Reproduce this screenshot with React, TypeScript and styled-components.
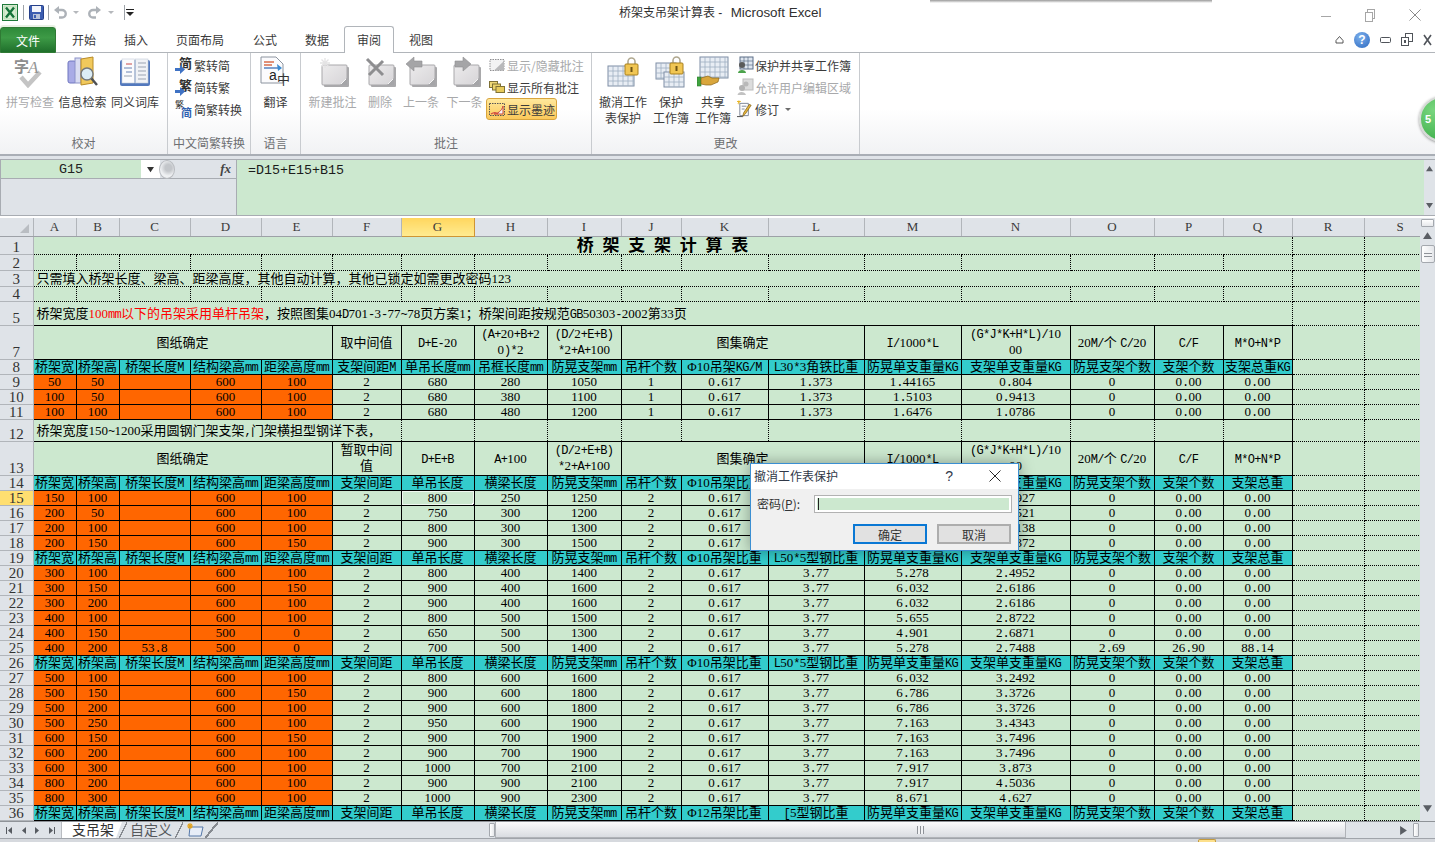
import React, { ReactNode } from "react";
import styled, { createGlobalStyle } from "styled-components";

const GREEN = "#cce8cf";
const CYAN = "#33cccc";
const ORANGE = "#ff6600";
const GRAY = "#dfe3e8";
const LINE = "#b1b5ba";
const UI_FONT = `"Noto Sans CJK SC", "Liberation Sans", sans-serif`;
const CELL_FONT = `"Liberation Serif", "Noto Sans CJK SC", serif`;
const FW_COMMA = "\uff0c";
const FW_SEMI = "\uff1b";

const Global = createGlobalStyle`
  html, body { margin: 0; padding: 0; overflow: hidden; background: #fff; }
  * { box-sizing: border-box; }
`;

const Root = styled.div`
  position: relative;
  width: 1435px;
  height: 842px;
  overflow: hidden;
  display: flex;
  flex-direction: column;
  font-family: ${UI_FONT};
  font-size: 12px;
  color: #3b3b3b;
  background: #fff;
`;

/* ---------- title bar ---------- */
const TitleBar = styled.div`
  position: relative;
  flex: none;
  height: 26px;
  display: flex;
  align-items: flex-start;
  background: #fff;
`;
const TopShadow = styled.div`
  position: absolute;
  left: 930px;
  top: 0;
  width: 282px;
  height: 3px;
  background: linear-gradient(#9a9a9a, #ffffff00);
`;
const Qat = styled.div`
  width: 619px;
  height: 24px;
  display: flex;
  align-items: center;
  padding-left: 2px;
`;
const QatSep = styled.span`
  width: 1px;
  height: 15px;
  background: #9ea3a9;
  margin: 0 ${(p: { $m: number }) => p.$m}px;
`;
const QatDrop = styled.span`
  width: 0;
  height: 0;
  margin: 1px 9px 0 6px;
  border-left: 3px solid transparent;
  border-right: 3px solid transparent;
  border-top: 3px solid #b5b8bc;
`;
const AppTitle = styled.div`
  font-family: "Liberation Sans", "Noto Sans CJK SC", sans-serif;
  font-size: 12px;
  line-height: 26px;
  color: #303030;
  white-space: nowrap;
`;
const AppName = styled.span`
  font-size: 13.4px;
  margin-left: 5px;
`;
const WinControls = styled.div`
  margin-left: auto;
  display: flex;
  align-items: center;
  height: 26px;
  padding-top: 4px;
  padding-right: 14px;
  gap: 34px;
`;

/* ---------- tab row ---------- */
const TabRow = styled.div`
  flex: none;
  height: 27px;
  display: flex;
  align-items: flex-end;
  border-bottom: 1px solid ${LINE};
  background: #fff;
`;
const FileTab = styled.div`
  position: relative;
  width: 56px;
  height: 26px;
  margin-bottom: -1px;
  border-radius: 3px 3px 0 0;
  border: 1px solid #2f7a34;
  background: linear-gradient(#2e8a3a 0%, #3d9a46 40%, #1f6f2b 100%);
  box-shadow: 0 -2px 0 #e8f1e4, 0 3px 0 #e4efdf;
  color: #fff;
  text-align: center;
  line-height: 25px;
  font-size: 12px;
`;
const RibbonTab = styled.div<{ $w: number; $active?: boolean }>`
  width: ${(p) => p.$w}px;
  height: ${(p) => (p.$active ? 27 : 25)}px;
  margin-bottom: ${(p) => (p.$active ? -1 : 0)}px;
  text-align: center;
  line-height: ${(p) => (p.$active ? 26 : 25)}px;
  background: #fff;
  border: ${(p) => (p.$active ? `1px solid ${LINE}` : "none")};
  border-bottom: none;
  border-radius: 3px 3px 0 0;
  position: relative;
  color: #3a3a3a;
`;
const HelpRow = styled.div`
  margin-left: auto;
  height: 25px;
  display: flex;
  align-items: center;
  padding-right: 3px;
  gap: 10px;
`;
const HelpDot = styled.span`
  width: 16px;
  height: 16px;
  border-radius: 50%;
  background: radial-gradient(circle at 40% 30%, #7db0ec, #2c69c0);
  color: #fff;
  font: bold 12px/16px "Liberation Sans", sans-serif;
  text-align: center;
`;

/* ---------- ribbon ---------- */
const Ribbon = styled.div`
  position: relative;
  flex: none;
  height: 103px;
  display: flex;
  background: linear-gradient(#ffffff 55%, #f1f2f4 100%);
  border-bottom: 2px solid #a9aeb5;
`;
const Group = styled.div<{ $w: number }>`
  width: ${(p) => p.$w}px;
  flex: none;
  display: flex;
  flex-direction: column;
  border-right: 1px solid #c8cbcf;
`;
const GroupBody = styled.div<{ $pl?: number }>`
  flex: 1;
  display: flex;
  padding-left: ${(p) => p.$pl ?? 0}px;
`;
const GroupLabel = styled.div`
  flex: none;
  height: 22px;
  line-height: 21px;
  text-align: center;
  color: #6d6f72;
  white-space: nowrap;
`;
const BigBtn = styled.div<{ $w: number; $off?: boolean }>`
  width: ${(p) => p.$w}px;
  flex: none;
  display: flex;
  flex-direction: column;
  align-items: center;
  padding-top: 3px;
  color: ${(p) => (p.$off ? "#a8a9ab" : "#3b3b3b")};
`;
const BigLabel = styled.div`
  margin-top: 6px;
  line-height: 16px;
  text-align: center;
  white-space: pre;
`;
const SmallCol = styled.div<{ $ml?: number }>`
  display: flex;
  flex-direction: column;
  align-items: flex-start;
  padding-top: 1px;
  margin-left: ${(p) => p.$ml ?? 0}px;
`;
const SmallBtn = styled.div<{ $off?: boolean; $on?: boolean }>`
  height: 22px;
  display: flex;
  align-items: center;
  gap: 1px;
  padding: 0 2px 0 2px;
  white-space: nowrap;
  color: ${(p) => (p.$off ? "#a8a9ab" : "#3b3b3b")};
  border-radius: 3px;
  ${(p) =>
    p.$on
      ? `background: linear-gradient(#ffe89c, #fbc85a); border: 1px solid #d8a53e; padding: 0 1px;`
      : ""}
`;
const MiniCaret = styled.span`
  width: 0;
  height: 0;
  margin-left: 5px;
  border-left: 3px solid transparent;
  border-right: 3px solid transparent;
  border-top: 3px solid #6d6d6d;
`;
const FloatBall = styled.div`
  position: absolute;
  left: 1419px;
  top: 43px;
  width: 46px;
  height: 46px;
  border-radius: 50%;
  border: 2px solid #d6dad6;
  background: radial-gradient(circle at 30% 30%, #79d67f, #2fa53c);
  box-shadow: 0 1px 3px rgba(0, 0, 0, 0.4);
  color: #fff;
  font: bold 11px/42px "Liberation Sans", sans-serif;
  padding-left: 4px;
`;

/* ---------- formula bar ---------- */
const FormulaWrap = styled.div`
  flex: none;
  height: 63px;
  padding-top: 3px;
  background: ${GRAY};
`;
const FormulaBar = styled.div`
  height: 57px;
  display: flex;
  border: 1px solid #a8acb2;
  border-right: none;
`;
const FormulaLeft = styled.div`
  width: 236px;
  flex: none;
  display: flex;
  flex-direction: column;
  border-right: 1px solid #a8acb2;
  background: ${GRAY};
`;
const NameRow = styled.div`
  height: 19px;
  flex: none;
  display: flex;
  border-bottom: 1px solid #a8acb2;
`;
const NameBox = styled.div`
  width: 140px;
  flex: none;
  background: ${GREEN};
  font: 13.33px/20px "Liberation Mono", monospace;
  text-align: center;
  color: #222;
`;
const NameDrop = styled.div`
  width: 19px;
  flex: none;
  background: #fff;
  display: flex;
  align-items: center;
  justify-content: center;
`;
const FxZone = styled.div`
  flex: 1;
  display: flex;
  align-items: center;
  justify-content: space-between;
  padding-right: 5px;
`;
const FxGrip = styled.span`
  width: 16px;
  height: 19px;
  margin-left: -1px;
  border-radius: 50%;
  border: 1px solid #b9bcc0;
  background: radial-gradient(circle at 60% 40%, #c3c6ca 25%, #eef0f2 60%);
`;
const Fx = styled.span`
  font: italic bold 13px/16px "Liberation Serif", serif;
  color: #444;
`;
const FormulaInput = styled.div`
  flex: 1;
  background: ${GREEN};
  font: 13.33px/21px "Liberation Mono", monospace;
  color: #1b1b1b;
  padding-left: 11px;
`;
const FormulaScroll = styled.div`
  width: 11px;
  flex: none;
  background: ${GRAY};
  display: flex;
  flex-direction: column;
  align-items: center;
  justify-content: space-between;
  padding: 5px 0 6px;
`;
const SplitLine = styled.div`
  height: 4px;
  background: #fff;
  border-bottom: 2px solid #a8acb2;
  margin-top: 0;
`;

/* ---------- sheet ---------- */
const SheetArea = styled.div`
  flex: none;
  height: 603px;
  margin-top: -1px;
  display: flex;
  overflow: hidden;
`;
const SheetClip = styled.div`
  width: 1420px;
  flex: none;
  overflow: hidden;
  background: ${GREEN};
`;
const Sheet = styled.table`
  table-layout: fixed;
  width: 1436px;
  border-collapse: collapse;
  font-family: ${CELL_FONT};
  font-size: 13px;
  color: #000;
`;
const Tr = styled.tr<{ $h: number }>`
  height: ${(p) => p.$h}px;
`;
const Corner = styled.th`
  padding: 0;
  background: ${GRAY};
  border-right: 1px solid ${LINE};
  border-bottom: 1px solid #9da1a7;
  position: relative;
`;
const CornerTri = styled.span`
  position: absolute;
  right: 4px;
  bottom: 3px;
  width: 0;
  height: 0;
  border-left: 9px solid transparent;
  border-bottom: 9px solid #b9bdc2;
`;
const ColHead = styled.th<{ $on?: boolean }>`
  padding: 0;
  font-weight: 400;
  font-size: 13px;
  color: #3a3a3a;
  background: ${(p) => (p.$on ? "linear-gradient(#ffd65e, #ffeb90)" : GRAY)};
  border-right: 1px solid ${(p) => (p.$on ? "#cf9533" : LINE)};
  border-left: 1px solid ${(p) => (p.$on ? "#cf9533" : LINE)};
  border-bottom: 1px solid ${(p) => (p.$on ? "#cf9533" : "#9da1a7")};
`;
const RowHead = styled.td<{ $on?: boolean }>`
  padding: 0;
  font-size: 15px;
  line-height: 14px;
  text-align: center;
  vertical-align: bottom;
  color: #333;
  overflow: hidden;
  background: ${(p) => (p.$on ? "#ffdf70" : GRAY)};
  border-right: 1px solid ${LINE};
  border-bottom: 1px solid ${LINE};
`;
type CellKind = "green" | "cyan" | "orange";
const Cell = styled.td<{
  $kind: CellKind;
  $dot?: boolean;
  $left?: boolean;
  $wrap?: boolean;
  $big?: boolean;
  $rs?: boolean;
}>`
  position: relative;
  padding: 0 ${(p) => (p.$left ? "0 0 3px" : "0")};
  overflow: ${(p) => (p.$left ? "visible" : "hidden")};
  white-space: ${(p) => (p.$wrap ? "pre" : "nowrap")};
  line-height: ${(p) => (p.$wrap ? "16px" : "13px")};
  text-align: ${(p) => (p.$left ? "left" : "center")};
  vertical-align: middle;
  font-size: ${(p) => (p.$big ? "17px" : "13px")};
  font-weight: ${(p) => (p.$big ? 700 : 400)};
  word-spacing: ${(p) => (p.$big ? "4.5px" : "0")};
  border: 1px ${(p) => (p.$dot ? "dotted" : "solid")} #000;
  ${(p) => (p.$rs ? "border-right: 1px solid #000;" : "")}
  background: ${(p) => (p.$kind === "cyan" ? CYAN : p.$kind === "orange" ? ORANGE : GREEN)};
`;
const Latin = styled.span`
  font-family: "Liberation Mono", monospace;
  font-size: 12px;
  letter-spacing: -0.7px;
  line-height: 10px;
`;
const Red = styled.span`
  color: #ff0000;
`;
const Selection = styled.div`
  position: absolute;
  left: -2px;
  right: -2px;
  top: -2px;
  bottom: -2px;
  border: 2px solid #2b1436;
  outline: 1px solid #ffffffb0;
  outline-offset: -3px;
  pointer-events: none;
`;
const SelHandle = styled.div`
  position: absolute;
  right: -4px;
  bottom: -4px;
  width: 5px;
  height: 5px;
  background: #2b1436;
  outline: 1px solid #fff;
`;

const VScroll = styled.div`
  width: 15px;
  flex: none;
  display: flex;
  flex-direction: column;
  align-items: center;
  background: ${GRAY};
`;
const VSplit = styled.div`
  width: 13px;
  height: 8px;
  margin-top: 1px;
  background: linear-gradient(#fff, #e6e8eb);
  border: 1px solid #a4a8ae;
  border-radius: 1px;
`;
const VThumb = styled.div`
  width: 14px;
  height: 18px;
  margin-top: 5px;
  border: 1px solid #a4a8ae;
  border-radius: 2px;
  background: repeating-linear-gradient(#f2f3f5 0 2px, #8e9298 2px 3px) center / 8px 7px no-repeat,
    linear-gradient(90deg, #fff, #e3e5e9);
`;
const VArrow = styled.div<{ $mt: number }>`
  margin-top: ${(p) => p.$mt}px;
  width: 9px;
  height: 9px;
`;

/* ---------- bottom bar ---------- */
const SheetBar = styled.div`
  flex: none;
  height: 17px;
  display: flex;
  align-items: stretch;
  background: ${GRAY};
  border-top: 1px solid #8f9398;
`;
const NavZone = styled.div`
  width: 62px;
  flex: none;
  display: flex;
  align-items: center;
  justify-content: space-around;
  padding: 0 3px 0 3px;
  border-right: 1px solid #b9bcc1;
`;
const SheetTab = styled.div<{ $on?: boolean; $w: number; $pl: number }>`
  width: ${(p) => p.$w}px;
  flex: none;
  font-size: 14px;
  line-height: 15px;
  padding-left: ${(p) => p.$pl}px;
  color: ${(p) => (p.$on ? "#333" : "#55585c")};
  background: ${(p) => (p.$on ? "#fff" : "transparent")};
  clip-path: ${(p) => (p.$on ? "polygon(0 0, 100% 0, calc(100% - 6px) 100%, 0 100%)" : "none")};
  white-space: nowrap;
`;
const TabSlash = styled.span<{ $w?: number }>`
  width: ${(p) => p.$w ?? 8}px;
  flex: none;
  margin-left: -3px;
  background: linear-gradient(to bottom right, transparent 46%, #868a90 46%, #868a90 56%, transparent 56%);
`;
const NewTab = styled.div`
  width: 25px;
  flex: none;
  display: flex;
  align-items: center;
  justify-content: center;
`;
const TabFill = styled.div`
  flex: 1;
`;
const HSplit = styled.div`
  width: 6px;
  flex: none;
  margin: 1px 0;
  border: 1px solid #a4a8ae;
  background: linear-gradient(90deg, #fff, #e6e8eb);
  border-radius: 1px;
`;
const HThumb = styled.div`
  width: 851px;
  flex: none;
  border: 1px solid #b0b3b8;
  border-top: none;
  background: linear-gradient(#fbfbfc, #d9dce1);
  display: flex;
  align-items: center;
  justify-content: center;
`;
const HGrip = styled.span`
  width: 7px;
  height: 8px;
  background: repeating-linear-gradient(90deg, #8e9298 0 1px, #f2f3f5 1px 3px);
`;
const HTrack = styled.div`
  width: 67px;
  flex: none;
  display: flex;
  align-items: center;
  justify-content: flex-end;
  padding-right: 5px;
`;
const BarEnd = styled.span`
  flex: none;
  width: 16px;
`;
const StatusBar = styled.div`
  flex: 1;
  min-height: 0;
  position: relative;
  background: #d6d9de;
  border-top: 1px solid #a0a4aa;
`;
const StatusStub = styled.span`
  position: absolute;
  left: 1198px;
  top: 0;
  width: 18px;
  height: 4px;
  background: #fde08c;
  border: 1px solid #c49a3e;
  border-bottom: none;
  border-radius: 2px 2px 0 0;
`;

/* ---------- dialog ---------- */
const Dialog = styled.div`
  position: absolute;
  left: 750px;
  top: 463px;
  width: 269px;
  height: 88px;
  display: flex;
  flex-direction: column;
  background: #f0f0f0;
  border: 1px solid #3b8fd2;
  box-shadow: 0 0 14px rgba(0, 0, 0, 0.35);
  color: #333;
`;
const DialogTitle = styled.div`
  flex: none;
  height: 25px;
  display: flex;
  align-items: center;
  padding: 0 0 2px 3px;
  background: #fff;
  color: #303848;
`;
const DialogHelp = styled.span`
  margin-left: auto;
  margin-right: 36px;
  font: 14px/16px "Liberation Sans", sans-serif;
`;
const DialogClose = styled.div`
  margin-right: 17px;
  display: flex;
`;
const DialogRow = styled.div`
  display: flex;
  align-items: center;
  padding: 6px 6px 0 6px;
  gap: 8px;
`;
const DialogLabel = styled.span`
  margin-top: -2px;
`;
const Field = styled.div`
  width: 198px;
  height: 18px;
  margin-left: auto;
  border: 1px solid #b2b2b2;
  padding: 2px;
  background: #fff;
`;
const FieldInner = styled.div`
  height: 100%;
  background: ${GREEN};
  padding-left: 1px;
`;
const Caret = styled.span`
  display: block;
  width: 1px;
  height: 100%;
  background: #222;
`;
const DialogBtns = styled.div`
  display: flex;
  justify-content: flex-end;
  gap: 10px;
  padding: 11px 7px 0 0;
`;
const DialogBtn = styled.div<{ $main?: boolean }>`
  width: 74px;
  height: 20px;
  text-align: center;
  line-height: 17px;
  background: #e1e1e1;
  border: 2px solid ${(p) => (p.$main ? "#0a78d4" : "#adadad")};
`;

/* ---------- drawn icons ---------- */
const Ico = styled.svg`
  display: block;
  flex: none;
`;
const svgFont = `"Noto Sans CJK SC", sans-serif`;

const Tri = ({ r = 0, c = "#555", s = 7 }: { r?: number; c?: string; s?: number }) => (
  <Ico width={s} height={s} viewBox="0 0 8 8" transform={`rotate(${r})`}>
    <path d="M4 1 L8 7 H0 Z" fill={c} />
  </Ico>
);
const NavIcon = ({ dir, bar }: { dir: number; bar?: boolean }) => (
  <Ico width={9} height={9} viewBox="0 0 9 9">
    {dir < 0 ? <path d="M7 1 L3 4.5 L7 8 Z" fill="#565a60" /> : <path d="M2 1 L6 4.5 L2 8 Z" fill="#565a60" />}
    {bar && <rect x={dir < 0 ? 1 : 7} y="1" width="1" height="7" fill="#565a60" />}
  </Ico>
);
const ExcelLogo = () => (
  <Ico width={16} height={17} viewBox="0 0 16 17">
    <rect x=".5" y=".5" width="15" height="16" fill="#eaf5e6" stroke="#1f7a3a" />
    <rect x="2" y="2" width="12" height="13" fill="#d9eed2" stroke="#9fcb9a" strokeWidth=".6" />
    <path d="M4 3.5 L12 13.5 M12 3.5 L4 13.5" stroke="#17733a" strokeWidth="2.4" />
  </Ico>
);
const SaveIcon = () => (
  <Ico width={15} height={15} viewBox="0 0 15 15">
    <rect x=".5" y=".5" width="14" height="14" rx="1" fill="#3c5db0" stroke="#26408a" />
    <rect x="3" y="1" width="9" height="6" fill="#f3f5fb" />
    <rect x="4" y="9" width="7" height="5" fill="#b8c2d8" />
    <rect x="5" y="10" width="2" height="3" fill="#3c5db0" />
  </Ico>
);
const UndoIcon = ({ flip }: { flip?: boolean }) => (
  <Ico width={14} height={15} viewBox="0 0 14 15" transform={flip ? "scale(-1 1)" : undefined}>
    <path d="M5 5 H9 A3.6 3.6 0 0 1 9 12.5 H6" fill="none" stroke="#adb2b8" strokeWidth="2.4" />
    <path d="M6 1 L6 9 L1 5 Z" fill="#adb2b8" />
  </Ico>
);
const CustomIcon = () => (
  <Ico width={8} height={9} viewBox="0 0 8 9">
    <rect x="0" y="1" width="8" height="1" fill="#222" />
    <path d="M0 4 H8 L4 8 Z" fill="#222" />
  </Ico>
);
const WinMin = () => (
  <Ico width={10} height={10} viewBox="0 0 10 10">
    <path d="M0 6.5 H10" stroke="#a6a6a6" />
  </Ico>
);
const WinMax = () => (
  <Ico width={10} height={13} viewBox="0 0 10 13">
    <rect x="2.5" y=".5" width="7" height="9" fill="#fff" stroke="#a6a6a6" />
    <rect x=".5" y="3.5" width="7" height="9" fill="#fff" stroke="#a6a6a6" />
  </Ico>
);
const WinClose = ({ c = "#8a8a8a", s = 12 }: { c?: string; s?: number }) => (
  <Ico width={s} height={s} viewBox="0 0 12 12">
    <path d="M.5 .5 L11.5 11.5 M11.5 .5 L.5 11.5" stroke={c} />
  </Ico>
);
const CaretUp = () => (
  <Ico width={9} height={9} viewBox="0 0 9 9">
    <path d="M1 5.5 L4.5 1.5 L8 5.5 V8 H1 Z" fill="none" stroke="#555" />
  </Ico>
);
const MiniMin = () => (
  <Ico width={11} height={8} viewBox="0 0 11 8">
    <rect x=".5" y="1.5" width="10" height="5" rx="1" fill="none" stroke="#50545a" />
  </Ico>
);
const MiniRestore = () => (
  <Ico width={12} height={13} viewBox="0 0 12 13">
    <rect x="4.5" y=".5" width="7" height="8" fill="#fff" stroke="#50545a" />
    <rect x=".5" y="4.5" width="7" height="8" fill="#fff" stroke="#50545a" />
    <rect x="3" y="7" width="2" height="3" fill="#50545a" />
  </Ico>
);
const MiniClose = () => (
  <Ico width={9} height={12} viewBox="0 0 9 12">
    <path d="M1 1 L8 11 M8 1 L1 11" stroke="#50545a" strokeWidth="1.6" />
  </Ico>
);

const SpellIcon = () => (
  <Ico width={32} height={32} viewBox="0 0 32 32">
    <path d="M7 21 L14 29 L26 16" fill="none" stroke="#c4c4c4" strokeWidth="4.5" />
    <text x="0" y="16" fontSize="15" fontWeight="700" fontFamily={svgFont} fill="#8d8d8d">字</text>
    <text x="14" y="17" fontSize="17" fontStyle="italic" fontFamily="Liberation Serif" fill="#949494">A</text>
  </Ico>
);
const ResearchIcon = () => (
  <Ico width={32} height={32} viewBox="0 0 32 32">
    <rect x="1" y="5" width="8" height="22" rx="2" fill="#a9abe6" stroke="#6f76bf" />
    <rect x="8" y="2" width="6" height="25" fill="#d9dcf2" stroke="#8b92c8" />
    <path d="M14 3 L26 1 V27 L14 29 Z" fill="#f1c95c" stroke="#b88b26" />
    <circle cx="20" cy="18" r="6" fill="#dcedf5" stroke="#74777b" strokeWidth="1.4" />
    <path d="M24.5 22.5 L30 29" stroke="#4e5054" strokeWidth="2.4" />
  </Ico>
);
const ThesaurusIcon = () => (
  <Ico width={32} height={32} viewBox="0 0 32 32">
    <rect x="1" y="4" width="30" height="26" rx="2" fill="#5278bd" />
    <rect x="3" y="3" width="12.5" height="24" fill="#fbfbfd" stroke="#c2cbd9" strokeWidth=".6" />
    <rect x="16.5" y="3" width="12.5" height="24" fill="#f0f2f6" stroke="#c2cbd9" strokeWidth=".6" />
    {[7, 11, 15, 19, 23].map((y) => (
      <path key={y} d={`M19 ${y} H27`} stroke="#9aa3b2" />
    ))}
    <path d="M7 8 H13" stroke="#c84a4a" />
    <path d="M5 12 H13 M7 16 H13" stroke="#6a84b4" />
    <path d="M5 20 H13" stroke="#9aa3b2" />
  </Ico>
);
const TranslateIcon = () => (
  <Ico width={32} height={32} viewBox="0 0 32 32">
    <path d="M1 1 H16 L23 8 V27 H1 Z" fill="#fbfbfd" stroke="#8c949f" />
    <path d="M4 6 H14" stroke="#d2552f" strokeWidth="1.3" />
    <path d="M4 9 H12" stroke="#d2552f" strokeWidth="1.3" />
    <path d="M4 12 H18" stroke="#3d6fb5" strokeWidth="1.3" />
    <path d="M17 8 L22 12 L18 15" fill="#3a8ad0" />
    <text x="9" y="24" fontSize="14" fontFamily="Liberation Sans" fill="#222">a</text>
    <text x="17" y="28" fontSize="13" fontFamily={svgFont} fill="#333">中</text>
  </Ico>
);
const NoteIcon = ({ mark }: { mark: "new" | "del" | "prev" | "next" }) => (
  <Ico width={32} height={32} viewBox="0 0 32 32">
    <defs>
      <linearGradient id={`note-${mark}`} x1="0" y1="0" x2="1" y2="1">
        <stop offset="0" stopColor="#ecebec" />
        <stop offset="1" stopColor="#d6d4d7" />
      </linearGradient>
    </defs>
    <rect x="7" y="11" width="25" height="20" rx="1" fill="#a9a9ab" />
    <rect x="5" y="9" width="25" height="20" rx="1" fill={`url(#note-${mark})`} stroke="#a9a8ab" />
    <path d="M30 22 V29 H23 Z" fill="#a5a5a8" />
    <path d="M24 28 L29 23" stroke="#f4f4f4" />
    {mark === "new" && (
      <path d="M8 2 V12 M3 7 H13 M4.5 3.5 L11.5 10.5 M11.5 3.5 L4.5 10.5" stroke="#e4e3e4" strokeWidth="1.3" />
    )}
    {mark === "del" && <path d="M3 3 L19 19 M19 5 L5 19" stroke="#8e8e90" strokeWidth="3" />}
    {mark === "prev" && <path d="M1 8 L9 1 V5 H17 V11 H9 V15 Z" fill="#a5a5a7" stroke="#8f8f91" strokeWidth=".6" />}
    {mark === "next" && <path d="M22 8 L14 1 V5 H6 V11 H14 V15 Z" fill="#a5a5a7" stroke="#8f8f91" strokeWidth=".6" />}
  </Ico>
);
const GridBlock = ({ x, y, w, h, fill = "#e8edf4" }: { x: number; y: number; w: number; h: number; fill?: string }) => {
  const vs = [];
  for (let i = x + 5; i < x + w; i += 5) vs.push(`M${i} ${y} V${y + h}`);
  const hs = [];
  for (let j = y + 5; j < y + h; j += 5) hs.push(`M${x} ${j} H${x + w}`);
  return (
    <g>
      <rect x={x} y={y} width={w} height={h} fill={fill} stroke="#7f8ea5" />
      <path d={[...vs, ...hs].join(" ")} stroke="#a0aec2" strokeWidth=".8" />
    </g>
  );
};
const Padlock = ({ x, y }: { x: number; y: number }) => (
  <g>
    <path d={`M${x + 3} ${y + 5} V${y + 2.5} A3.5 3.5 0 0 1 ${x + 10} ${y + 2.5} V${y + 5}`} fill="none" stroke="#b0a890" strokeWidth="1.6" />
    <rect x={x} y={y + 5} width="13" height="11" rx="1" fill="#f1c653" stroke="#a9801f" />
    <rect x={x + 5.5} y={y + 8} width="2" height="5" fill="#6f5414" />
  </g>
);
const UnprotectIcon = () => (
  <Ico width={32} height={32} viewBox="0 0 32 32">
    <GridBlock x={1} y={10} w={26} h={20} />
    <Padlock x={18} y={3} />
  </Ico>
);
const ProtectBookIcon = () => (
  <Ico width={32} height={32} viewBox="0 0 32 32">
    <GridBlock x={1} y={7} w={20} h={16} />
    <GridBlock x={9} y={16} w={20} h={15} />
    <Padlock x={15} y={2} />
  </Ico>
);
const ShareIcon = () => (
  <Ico width={32} height={32} viewBox="0 0 32 32">
    <GridBlock x={3} y={1} w={28} h={21} />
    <rect x="0" y="21" width="4" height="9" fill="#3fa33f" stroke="#2d7a2d" strokeWidth=".6" />
    <path d="M4 22 L11 20 L15 22 L22 22 L21 26 L14 29 L9 29 L4 28 Z" fill="#d9a63c" stroke="#8a6417" strokeWidth=".7" />
  </Ico>
);
const GlyphArrow = ({ g }: { g: string }) => (
  <Ico width={18} height={22} viewBox="0 -3 18 22">
    <text x="4" y="11" fontSize="13" fontWeight="700" fontFamily={svgFont} fill="#2f2f2f">{g}</text>
    <path d="M0 11 H5 V8 L10 12.5 L5 17 V14 H0 Z" fill="#3f72c4" />
  </Ico>
);
const GlyphPair = () => (
  <Ico width={18} height={22} viewBox="0 -3 18 22">
    <text x="0" y="7" fontSize="9" fontFamily={svgFont} fill="#333">繁</text>
    <text x="6" y="16" fontSize="11" fontWeight="700" fontFamily={svgFont} fill="#2c5fb0">简</text>
  </Ico>
);
const ToggleNote = () => (
  <Ico width={18} height={18} viewBox="0 0 18 18">
    <rect x="2" y="3.5" width="14" height="11" fill="#f2f2f3" stroke="#8f8f91" strokeDasharray="1.5 1" />
    <path d="M16 5 V14.5 H6 Z" fill="#b9b9bb" />
  </Ico>
);
const StackNote = () => (
  <Ico width={18} height={18} viewBox="0 0 18 18">
    <rect x="1.5" y="3.5" width="8" height="6" fill="#f0d977" stroke="#7f7135" />
    <rect x="4.5" y="6" width="8" height="6" fill="#ecd36a" stroke="#7f7135" />
    <rect x="8" y="8.5" width="8.5" height="6" fill="#e8cb5c" stroke="#7f7135" />
  </Ico>
);
const InkNote = () => (
  <Ico width={18} height={18} viewBox="0 0 18 18">
    <rect x="1.5" y="3.5" width="15" height="12" fill="none" stroke="#555" strokeDasharray="1.5 1" />
    <path d="M6 14 C9 14 14 11 15 6 L15 14 Z" fill="#f7f7f7" stroke="#c8473d" />
    <path d="M3 14 C6 12 8 12 10 14" fill="none" stroke="#d34a3f" strokeWidth="1.4" />
  </Ico>
);
const ProtectShareSmall = () => (
  <Ico width={17} height={18} viewBox="0 0 17 18">
    <rect x="3" y="1" width="13" height="12" fill="#dfe6ef" stroke="#5c6f88" />
    <path d="M7 1 V13 M11 1 V13 M3 5 H16 M3 9 H16" stroke="#5c6f88" strokeWidth=".7" />
    <circle cx="5" cy="9" r="3" fill="#5a5a5a" />
    <path d="M1 17 C1 13 9 13 9 17 Z" fill="#4ba34b" />
  </Ico>
);
const AllowEditSmall = () => (
  <Ico width={17} height={18} viewBox="0 0 17 18">
    <rect x="6" y="1" width="10" height="11" fill="#dcdcdc" stroke="#bcbcbc" />
    <circle cx="9" cy="6" r="2.5" fill="#b9b9b9" />
    <circle cx="5" cy="10" r="3" fill="#b3b3b3" />
    <path d="M0.5 17 C1 13 8 13 9 17 Z" fill="#c2c2c2" />
  </Ico>
);
const TrackIcon = () => (
  <Ico width={17} height={19} viewBox="0 0 18 19">
    <path d="M0 1 H4 M2 0 V4 M1 3 L3 1" stroke="#e8b21d" />
    <path d="M3 3 H12 V16 H3 Z" fill="#fff" stroke="#7b8496" />
    <path d="M5 6 H10 M5 9 H8" stroke="#7b8496" />
    <path d="M15 5 L9 14 L6 17 L7 13 L13 4 Z" fill="#e4b33a" stroke="#7a5a12" strokeWidth=".7" />
    <path d="M0 17 H6" stroke="#444" />
  </Ico>
);
const NewSheetIcon = () => (
  <Ico width={20} height={14} viewBox="0 0 20 14">
    <path d="M4 4 H17 L15 13 H3 Z" fill="#e7edf7" stroke="#5678a8" />
    <path d="M4 0 V6 M1 3 H7 M2 1 L6 5 M6 1 L2 5" stroke="#e2a21c" strokeWidth="1.1" />
  </Ico>
);

/* ---------- sheet data ---------- */
const COLS = ["A", "B", "C", "D", "E", "F", "G", "H", "I", "J", "K", "L", "M", "N", "O", "P", "Q", "R", "S"];
const WIDTHS = [33, 43, 43, 71, 71, 71, 69, 73, 73, 74, 60, 87, 96, 97, 109, 84, 69, 69, 72, 72];

interface C {
  t?: ReactNode;
  span?: number;
  kind?: CellKind;
  dot?: boolean;
  left?: boolean;
  wrap?: boolean;
  big?: boolean;
  rs?: boolean;
  sel?: boolean;
}
interface R {
  n: number;
  h: number;
  cells: C[];
  on?: boolean;
}

/* the sheet's original font gives every ASCII sign half a cell: set those in a narrow mono face */
const ASCII = /([A-Za-z+\-*/()=~.,\[\]]+)/;
const fmt = (s: ReactNode): ReactNode => {
  if (typeof s !== "string") return s;
  return s.split(ASCII).map((p, i) => (ASCII.test(p) ? <Latin key={i}>{p}</Latin> : p));
};

const dots = (from: number, to: number): C[] => {
  const out: C[] = [];
  for (let i = from; i <= to; i++) out.push({ dot: true });
  return out;
};

const head = (labels: string[]): C[] => labels.map((t) => ({ t, kind: "cyan" as CellKind }));
const COMMON = ["桥架宽", "桥架高", "桥架长度M", "结构梁高mm", "距梁高度mm"];
const TAIL = ["防晃单支重量KG", "支架单支重量KG", "防晃支架个数", "支架个数"];
const headA = (k: string, l: string): C[] =>
  head([...COMMON, "支架间距", "单吊长度", "横梁长度", "防晃支架mm", "吊杆个数", k, l, ...TAIL, "支架总重"]);

const data = (v: (string | number)[], sel?: boolean): C[] =>
  v.map((x, i) => ({
    t: String(x),
    kind: (i < 5 ? "orange" : "green") as CellKind,
    sel: sel && i === 6,
  }));

const row = (
  a: number, b: number, c: string, d: number, e: number, g: number, h: number, i: number,
  j: number, k: string, l: string, m: string, n: string, o = "0", p = "0.00", q = "0.00", sel = false
) => data([a, b, c, d, e, 2, g, h, i, j, k, l, m, n, o, p, q], sel);

const R1 = (a: number, b: number, g: number, h: number, i: number, m: string, n: string, d = 600, e = 100, c = "", o = "0", p = "0.00", q = "0.00") =>
  row(a, b, c, d, e, g, h, i, 2, "0.617", "3.77", m, n, o, p, q);

const ROWS: R[] = [
  { n: 1, h: 18, cells: [{ t: <>桥 架 支 架 计 算 表</>, span: 17, dot: true, big: true }] },
  { n: 2, h: 16, cells: dots(1, 17) },
  {
    n: 3,
    h: 16,
    cells: [
      {
        t: `只需填入桥架长度、梁高、距梁高度${FW_COMMA}其他自动计算${FW_COMMA}其他已锁定如需更改密码123`,
        span: 17,
        dot: true,
        left: true,
      },
    ],
  },
  { n: 4, h: 15, cells: dots(1, 17) },
  {
    n: 5,
    h: 24,
    cells: [
      {
        t: (
          <>
            桥架宽度
            <Red>{fmt("100mm以下的吊架采用单杆吊架")}</Red>
            {fmt(`${FW_COMMA}按照图集04D701-3-77~78页方案1${FW_SEMI}桥架间距按规范GB50303-2002第33页`)}
          </>
        ),
        span: 17,
        dot: true,
        left: true,
      },
    ],
  },
  {
    n: 7,
    h: 34,
    cells: [
      { t: "图纸确定", span: 5 },
      { t: "取中间值" },
      { t: "D+E-20" },
      { t: "(A+20+B+2\n0)*2", wrap: true },
      { t: "(D/2+E+B)\n*2+A+100", wrap: true },
      { t: "图集确定", span: 3 },
      { t: "I/1000*L" },
      { t: "(G*J*K+H*L)/10\n00", wrap: true },
      { t: "20M/个 C/20" },
      { t: "C/F" },
      { t: "M*O+N*P" },
    ],
  },
  {
    n: 8,
    h: 15,
    cells: head([
      ...COMMON, "支架间距M", "单吊长度mm", "吊框长度mm", "防晃支架mm", "吊杆个数", "Φ10吊架KG/M", "L30*3角铁比重",
      ...TAIL, "支架总重KG",
    ]),
  },
  { n: 9, h: 15, cells: data([50, 50, "", 600, 100, 2, 680, 280, 1050, 1, "0.617", "1.373", "1.44165", "0.804", 0, "0.00", "0.00"]) },
  { n: 10, h: 15, cells: data([100, 50, "", 600, 100, 2, 680, 380, 1100, 1, "0.617", "1.373", "1.5103", "0.9413", 0, "0.00", "0.00"]) },
  { n: 11, h: 15, cells: data([100, 100, "", 600, 100, 2, 680, 480, 1200, 1, "0.617", "1.373", "1.6476", "1.0786", 0, "0.00", "0.00"]) },
  {
    n: 12,
    h: 22,
    cells: [
      { t: `桥架宽度150~1200采用圆钢门架支架,门架横担型钢详下表${FW_COMMA}`, span: 6, dot: true, left: true },
      ...dots(1, 10),
      { dot: true, rs: true },
    ],
  },
  {
    n: 13,
    h: 34,
    cells: [
      { t: "图纸确定", span: 5 },
      { t: "暂取中间\n值", wrap: true },
      { t: "D+E+B" },
      { t: "A+100" },
      { t: "(D/2+E+B)\n*2+A+100", wrap: true },
      { t: "图集确定", span: 3 },
      { t: "I/1000*L" },
      { t: "(G*J*K+H*L)/10\n00", wrap: true },
      { t: "20M/个 C/20" },
      { t: "C/F" },
      { t: "M*O+N*P" },
    ],
  },
  { n: 14, h: 15, cells: headA("Φ10吊架比重", "L40*4型钢比重") },
  { n: 15, h: 15, on: true, cells: row(150, 100, "", 600, 100, 800, 250, 1250, 2, "0.617", "3.77", "4.713", "1.9927", "0", "0.00", "0.00", true) },
  { n: 16, h: 15, cells: row(200, 50, "", 600, 100, 750, 300, 1200, 2, "0.617", "3.77", "4.524", "1.9521", "0", "0.00", "0.00") },
  { n: 17, h: 15, cells: row(200, 100, "", 600, 100, 800, 300, 1300, 2, "0.617", "3.77", "4.901", "2.0138", "0", "0.00", "0.00") },
  { n: 18, h: 15, cells: row(200, 150, "", 600, 150, 900, 300, 1500, 2, "0.617", "3.77", "5.655", "2.1372", "0", "0.00", "0.00") },
  { n: 19, h: 15, cells: headA("Φ10吊架比重", "L50*5型钢比重") },
  { n: 20, h: 15, cells: R1(300, 100, 800, 400, 1400, "5.278", "2.4952") },
  { n: 21, h: 15, cells: R1(300, 150, 900, 400, 1600, "6.032", "2.6186", 600, 150) },
  { n: 22, h: 15, cells: R1(300, 200, 900, 400, 1600, "6.032", "2.6186") },
  { n: 23, h: 15, cells: R1(400, 100, 800, 500, 1500, "5.655", "2.8722") },
  { n: 24, h: 15, cells: R1(400, 150, 650, 500, 1300, "4.901", "2.6871", 500, 0) },
  { n: 25, h: 15, cells: R1(400, 200, 700, 500, 1400, "5.278", "2.7488", 500, 0, "53.8", "2.69", "26.90", "88.14") },
  { n: 26, h: 15, cells: headA("Φ10吊架比重", "L50*5型钢比重") },
  { n: 27, h: 15, cells: R1(500, 100, 800, 600, 1600, "6.032", "3.2492") },
  { n: 28, h: 15, cells: R1(500, 150, 900, 600, 1800, "6.786", "3.3726", 600, 150) },
  { n: 29, h: 15, cells: R1(500, 200, 900, 600, 1800, "6.786", "3.3726") },
  { n: 30, h: 15, cells: R1(500, 250, 950, 600, 1900, "7.163", "3.4343") },
  { n: 31, h: 15, cells: R1(600, 150, 900, 700, 1900, "7.163", "3.7496", 600, 150) },
  { n: 32, h: 15, cells: R1(600, 200, 900, 700, 1900, "7.163", "3.7496") },
  { n: 33, h: 15, cells: R1(600, 300, 1000, 700, 2100, "7.917", "3.873") },
  { n: 34, h: 15, cells: R1(800, 200, 900, 900, 2100, "7.917", "4.5036") },
  { n: 35, h: 15, cells: R1(800, 300, 1000, 900, 2300, "8.671", "4.627") },
  { n: 36, h: 15, cells: headA("Φ12吊架比重", "[5型钢比重") },
  { n: 37, h: 15, cells: data(["", "", "", "", "", "", "", "", "", "", "", "", "", "", "", "", ""]) },
];

/* ---------- app ---------- */
export default function App() {
  return (
    <Root>
      <Global />
      <TitleBar>
        <TopShadow />
        <Qat>
          <ExcelLogo />
          <QatSep $m={5} />
          <SaveIcon />
          <QatSep $m={4} />
          <UndoIcon />
          <QatDrop />
          <UndoIcon flip />
          <QatDrop />
          <QatSep $m={1} />
          <CustomIcon />
        </Qat>
        <AppTitle>桥架支吊架计算表 - <AppName>Microsoft Excel</AppName></AppTitle>
        <WinControls>
          <WinMin />
          <WinMax />
          <WinClose />
        </WinControls>
      </TitleBar>

      <TabRow>
        <FileTab>文件</FileTab>
        <RibbonTab $w={56}>开始</RibbonTab>
        <RibbonTab $w={48}>插入</RibbonTab>
        <RibbonTab $w={80}>页面布局</RibbonTab>
        <RibbonTab $w={50}>公式</RibbonTab>
        <RibbonTab $w={54}>数据</RibbonTab>
        <RibbonTab $w={50} $active>审阅</RibbonTab>
        <RibbonTab $w={54}>视图</RibbonTab>
        <HelpRow>
          <CaretUp />
          <HelpDot>?</HelpDot>
          <MiniMin />
          <MiniRestore />
          <MiniClose />
        </HelpRow>
      </TabRow>

      <Ribbon>
        <Group $w={168}>
          <GroupBody $pl={4}>
            <BigBtn $w={52} $off>
              <SpellIcon />
              <BigLabel>拼写检查</BigLabel>
            </BigBtn>
            <BigBtn $w={53}>
              <ResearchIcon />
              <BigLabel>信息检索</BigLabel>
            </BigBtn>
            <BigBtn $w={52}>
              <ThesaurusIcon />
              <BigLabel>同义词库</BigLabel>
            </BigBtn>
          </GroupBody>
          <GroupLabel>校对</GroupLabel>
        </Group>
        <Group $w={83}>
          <GroupBody $pl={5}>
            <SmallCol>
              <SmallBtn><GlyphArrow g="简" />繁转简</SmallBtn>
              <SmallBtn><GlyphArrow g="繁" />简转繁</SmallBtn>
              <SmallBtn><GlyphPair />简繁转换</SmallBtn>
            </SmallCol>
          </GroupBody>
          <GroupLabel>中文简繁转换</GroupLabel>
        </Group>
        <Group $w={50}>
          <GroupBody>
            <BigBtn $w={49}>
              <TranslateIcon />
              <BigLabel>翻译</BigLabel>
            </BigBtn>
          </GroupBody>
          <GroupLabel>语言</GroupLabel>
        </Group>
        <Group $w={291}>
          <GroupBody $pl={3}>
            <BigBtn $w={57} $off>
              <NoteIcon mark="new" />
              <BigLabel>新建批注</BigLabel>
            </BigBtn>
            <BigBtn $w={38} $off>
              <NoteIcon mark="del" />
              <BigLabel>删除</BigLabel>
            </BigBtn>
            <BigBtn $w={44} $off>
              <NoteIcon mark="prev" />
              <BigLabel>上一条</BigLabel>
            </BigBtn>
            <BigBtn $w={43} $off>
              <NoteIcon mark="next" />
              <BigLabel>下一条</BigLabel>
            </BigBtn>
            <SmallCol>
              <SmallBtn $off><ToggleNote />显示/隐藏批注</SmallBtn>
              <SmallBtn><StackNote />显示所有批注</SmallBtn>
              <SmallBtn $on><InkNote />显示墨迹</SmallBtn>
            </SmallCol>
          </GroupBody>
          <GroupLabel>批注</GroupLabel>
        </Group>
        <Group $w={268}>
          <GroupBody $pl={4}>
            <BigBtn $w={54}>
              <UnprotectIcon />
              <BigLabel>{"撤消工作\n表保护"}</BigLabel>
            </BigBtn>
            <BigBtn $w={42}>
              <ProtectBookIcon />
              <BigLabel>{"保护\n工作簿"}</BigLabel>
            </BigBtn>
            <BigBtn $w={42}>
              <ShareIcon />
              <BigLabel>{"共享\n工作簿"}</BigLabel>
            </BigBtn>
            <SmallCol $ml={1}>
              <SmallBtn><ProtectShareSmall />保护并共享工作簿</SmallBtn>
              <SmallBtn $off><AllowEditSmall />允许用户编辑区域</SmallBtn>
              <SmallBtn><TrackIcon />修订<MiniCaret /></SmallBtn>
            </SmallCol>
          </GroupBody>
          <GroupLabel>更改</GroupLabel>
        </Group>
        <FloatBall>5</FloatBall>
      </Ribbon>

      <FormulaWrap>
        <FormulaBar>
          <FormulaLeft>
            <NameRow>
              <NameBox>G15</NameBox>
              <NameDrop><Tri r={180} c="#333" /></NameDrop>
              <FxZone>
                <FxGrip />
                <Fx>fx</Fx>
              </FxZone>
            </NameRow>
          </FormulaLeft>
          <FormulaInput>=D15+E15+B15</FormulaInput>
          <FormulaScroll>
            <Tri c="#5a5e64" />
            <Tri r={180} c="#5a5e64" />
          </FormulaScroll>
        </FormulaBar>
        <SplitLine />
      </FormulaWrap>

      <SheetArea>
        <SheetClip>
          <Sheet>
            <colgroup>
              {WIDTHS.map((w, i) => (
                <col key={i} width={w} />
              ))}
            </colgroup>
            <thead>
              <Tr $h={18}>
                <Corner><CornerTri /></Corner>
                {COLS.map((c) => (
                  <ColHead key={c} $on={c === "G"}>{c}</ColHead>
                ))}
              </Tr>
            </thead>
            <tbody>
              {ROWS.map((r) => (
                <Tr key={r.n} $h={r.h}>
                  <RowHead $on={r.on}>{r.n}</RowHead>
                  {r.cells.map((c, i) => (
                    <Cell
                      key={i}
                      colSpan={c.span}
                      $kind={c.kind ?? "green"}
                      $dot={c.dot}
                      $left={c.left}
                      $wrap={c.wrap}
                      $big={c.big}
                      $rs={c.rs}
                    >
                      {fmt(c.t)}
                      {c.sel && (
                        <Selection>
                          <SelHandle />
                        </Selection>
                      )}
                    </Cell>
                  ))}
                  <Cell $kind="green" $dot />
                  <Cell $kind="green" $dot />
                </Tr>
              ))}
            </tbody>
          </Sheet>
        </SheetClip>
        <VScroll>
          <VSplit />
          <VArrow $mt={4}><Tri c="#5a5e64" s={9} /></VArrow>
          <VThumb />
          <VArrow $mt={541}><Tri r={180} c="#5a5e64" s={9} /></VArrow>
        </VScroll>
      </SheetArea>

      <SheetBar>
        <NavZone>
          <NavIcon dir={-1} bar />
          <NavIcon dir={-1} />
          <NavIcon dir={1} />
          <NavIcon dir={1} bar />
        </NavZone>
        <SheetTab $on $w={60} $pl={10}>支吊架</SheetTab>
        <TabSlash />
        <SheetTab $w={51} $pl={3}>自定义</SheetTab>
        <TabSlash />
        <NewTab><NewSheetIcon /></NewTab>
        <TabSlash $w={13} />
        <TabFill />
        <HSplit />
        <HThumb><HGrip /></HThumb>
        <HTrack><Tri r={90} c="#5a5e64" s={9} /></HTrack>
        <HSplit />
        <BarEnd />
      </SheetBar>
      <StatusBar>
        <StatusStub />
      </StatusBar>

      <Dialog>
        <DialogTitle>
          撤消工作表保护
          <DialogHelp>?</DialogHelp>
          <DialogClose>
            <WinClose c="#2a2a2a" />
          </DialogClose>
        </DialogTitle>
        <DialogRow>
          <DialogLabel>密码(<u>P</u>):</DialogLabel>
          <Field>
            <FieldInner>
              <Caret />
            </FieldInner>
          </Field>
        </DialogRow>
        <DialogBtns>
          <DialogBtn $main>确定</DialogBtn>
          <DialogBtn>取消</DialogBtn>
        </DialogBtns>
      </Dialog>
    </Root>
  );
}
